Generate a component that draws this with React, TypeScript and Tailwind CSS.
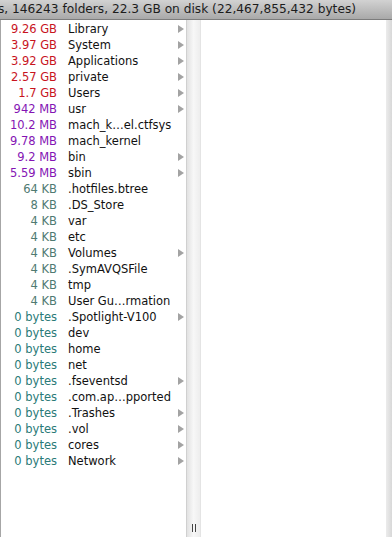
import React from "react";

type Entry = {
  size: string;
  name: string;
  kind: "gb" | "mb" | "kb" | "b";
  folder?: boolean;
};

const ENTRIES: Entry[] = [
  { size: "9.26 GB", name: "Library", kind: "gb", folder: true },
  { size: "3.97 GB", name: "System", kind: "gb", folder: true },
  { size: "3.92 GB", name: "Applications", kind: "gb", folder: true },
  { size: "2.57 GB", name: "private", kind: "gb", folder: true },
  { size: "1.7 GB", name: "Users", kind: "gb", folder: true },
  { size: "942 MB", name: "usr", kind: "mb", folder: true },
  { size: "10.2 MB", name: "mach_k…el.ctfsys", kind: "mb" },
  { size: "9.78 MB", name: "mach_kernel", kind: "mb" },
  { size: "9.2 MB", name: "bin", kind: "mb", folder: true },
  { size: "5.59 MB", name: "sbin", kind: "mb", folder: true },
  { size: "64 KB", name: ".hotfiles.btree", kind: "kb" },
  { size: "8 KB", name: ".DS_Store", kind: "kb" },
  { size: "4 KB", name: "var", kind: "kb" },
  { size: "4 KB", name: "etc", kind: "kb" },
  { size: "4 KB", name: "Volumes", kind: "kb", folder: true },
  { size: "4 KB", name: ".SymAVQSFile", kind: "kb" },
  { size: "4 KB", name: "tmp", kind: "kb" },
  { size: "4 KB", name: "User Gu…rmation", kind: "kb" },
  { size: "0 bytes", name: ".Spotlight-V100", kind: "b", folder: true },
  { size: "0 bytes", name: "dev", kind: "b" },
  { size: "0 bytes", name: "home", kind: "b" },
  { size: "0 bytes", name: "net", kind: "b" },
  { size: "0 bytes", name: ".fseventsd", kind: "b", folder: true },
  { size: "0 bytes", name: ".com.ap…pported", kind: "b" },
  { size: "0 bytes", name: ".Trashes", kind: "b", folder: true },
  { size: "0 bytes", name: ".vol", kind: "b", folder: true },
  { size: "0 bytes", name: "cores", kind: "b", folder: true },
  { size: "0 bytes", name: "Network", kind: "b", folder: true },
];

const SIZE_COLOR: Record<Entry["kind"], string> = {
  gb: "text-[#c8141e]",
  mb: "text-[#8414b4]",
  kb: "text-[#4f7a72]",
  b: "text-[#2a7a78]",
};

const Arrow = () => (
  <svg width="6" height="8" viewBox="0 0 6 8" className="block">
    <path d="M0 0 L6 4 L0 8 Z" fill="#a3a3a3" />
  </svg>
);

const Row = ({ entry }: { entry: Entry }) => (
  <div className="flex h-[16px] items-center whitespace-nowrap">
    <span className={`w-[56px] text-right ${SIZE_COLOR[entry.kind]}`}>
      {entry.size}
    </span>
    <span className="ml-[11px] flex-1 text-[#111]">{entry.name}</span>
    <span className="mr-[2px] w-[6px]">{entry.folder && <Arrow />}</span>
  </div>
);

export default function App() {
  return (
    <div
      className="flex h-[537px] w-[392px] flex-col overflow-hidden bg-white"
      style={{ fontFamily: '"DejaVu Sans", "Noto Sans", sans-serif' }}
    >
      <div className="flex h-[20px] shrink-0 items-center overflow-hidden whitespace-nowrap border-b border-[#7c7c7c] bg-gradient-to-b from-[#d2d2d2] to-[#a9a9a9] text-[12.2px] text-[#1c1c1c]">
        <span className="-ml-[2px]">
          s, 146243 folders, 22.3 GB on disk (22,467,855,432 bytes)
        </span>
      </div>

      <div className="flex flex-1">
        {/* first column */}
        <div className="w-[186px] border-l border-[#a6a6a6] pt-[1px] text-[11.5px] leading-[16px]">
          {ENTRIES.map((e) => (
            <Row key={e.name} entry={e} />
          ))}
        </div>

        {/* column divider with resize grip */}
        <div className="flex w-[14px] flex-col justify-end border-l border-[#d0d0d0] bg-gradient-to-r from-[#e2e2e2] via-[#f7f7f7] to-[#ededed]">
          <div className="flex h-[18px] items-center justify-center gap-[2px] pb-[1px]">
            <span className="h-[8px] w-[1px] bg-[#444]" />
            <span className="h-[8px] w-[1px] bg-[#444]" />
          </div>
        </div>

        {/* second (empty) column */}
        <div className="flex-1 border-l border-[#e4e4e4] bg-white" />

        {/* right edge */}
        <div className="w-[6px] bg-gradient-to-r from-[#ececec] to-[#d8d8d8]" />
      </div>
    </div>
  );
}
